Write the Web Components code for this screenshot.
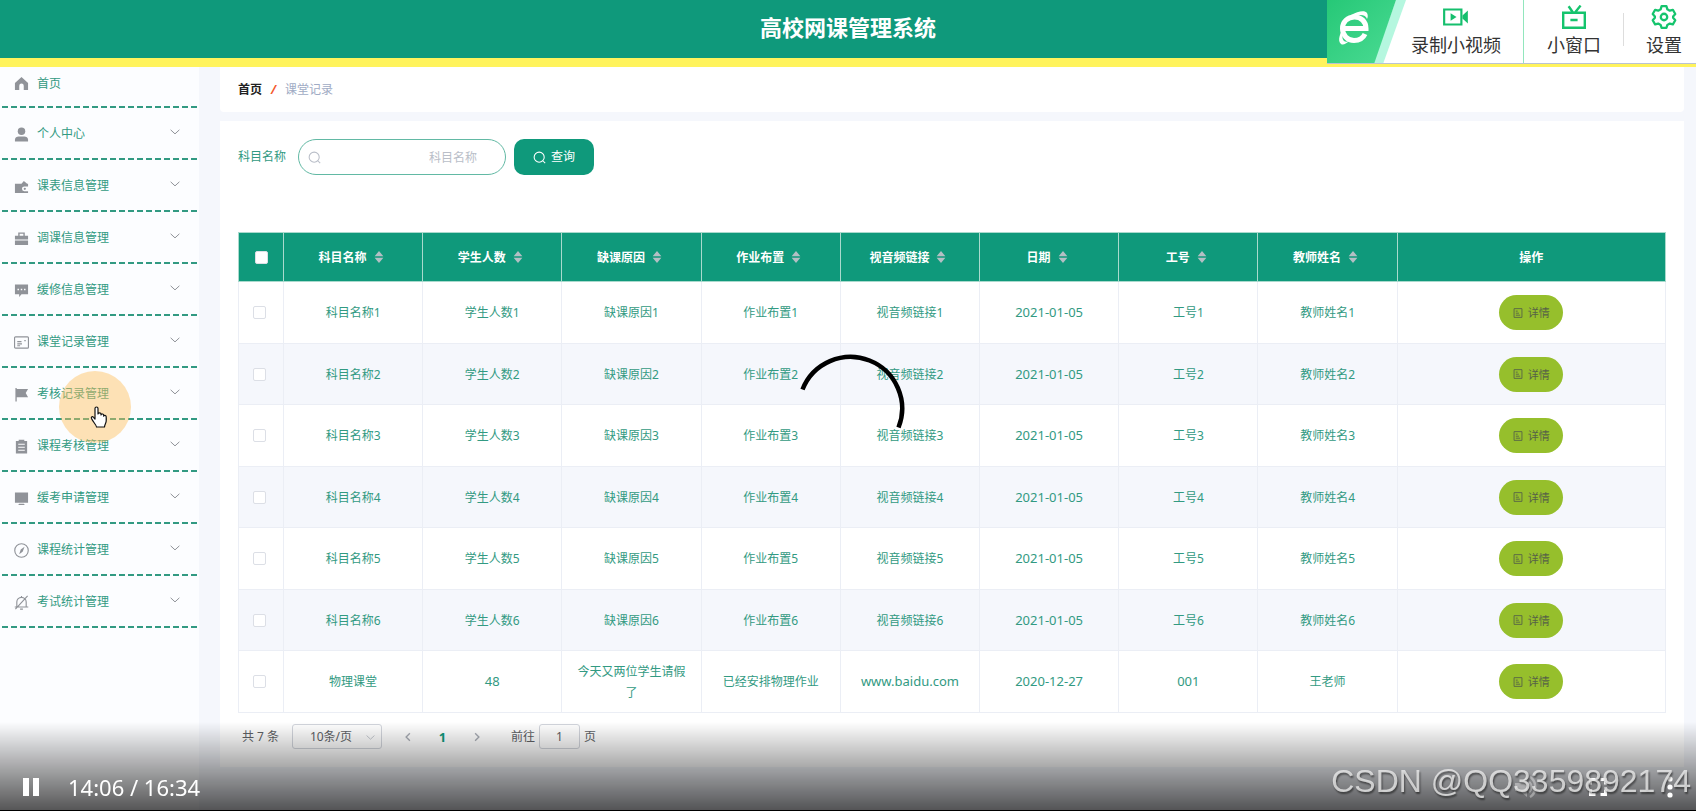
<!DOCTYPE html>
<html lang="zh-CN">
<head>
<meta charset="utf-8">
<meta name="viewport" content="width=device-width, initial-scale=1">
<title>高校网课管理系统</title>
<style>
  html { height: 100%; }
  body {
    margin: 0;
    min-height: 100%;
    --brand: #0f997b;
    --text: #329a82;
    --muted: #909399;
    --canvas: #f5f7fc;
    --line: #ebeef5;
    font: 12px/20px "Noto Sans", "Noto Sans CJK SC", sans-serif;
    color: var(--text);
    background: var(--canvas);
  }
</style>
</head>
<body>
<course-app></course-app>

<script>
const define = (name, html, setup) => {
  const tpl = document.createElement('template');
  tpl.innerHTML = html;
  customElements.define(name, class extends HTMLElement {
    connectedCallback() {
      if (this.shadowRoot) return;
      const root = this.attachShadow({ mode: 'open' });
      root.append(tpl.content.cloneNode(true));
      if (setup) setup(this, root);
    }
  });
};

/* ---------- icons ---------- */
const ICONS = {
  home: '<path fill="currentColor" d="M8 1 1 7.500V15h4.600V10.300a2.400 2.400 0 0 1 4.800 0V15H15V7.500z"/>',
  user: '<circle cx="8" cy="4.500" r="4" fill="currentColor"/><path fill="currentColor" d="M1 15.500v-2C1 11 3 10 5 10h6c2 0 4 1 4 3.500v2z"/>',
  wallet: '<path fill="currentColor" d="M1 5h7l2.500-3 3.500 3h1v3h-4a2.500 2.500 0 0 0 0 5h4v2H1z"/><circle cx="11.500" cy="10.500" r="1.200" fill="currentColor"/>',
  briefcase: '<path fill="currentColor" d="M1 5h3.500V1.500h7V5H15v4H1zM6 3v2h4V3zM1 10h14v5H1z" fill-rule="evenodd"/>',
  chat: '<path fill="currentColor" fill-rule="evenodd" d="M1 1.500h14V12H8l-2.500 3v-3H1zM3.700 6v1.600h1.600V6zm3.500 0v1.600h1.600V6zm3.500 0v1.600h1.600V6z"/>',
  card: '<g fill="none" stroke="currentColor" stroke-width="1.200"><rect x=".6" y="2" width="14.800" height="12" rx="1"/><path d="M3.500 7H8M3.500 9.500h5M3.500 11.500h3M11 6h1.500"/></g>',
  flag: '<path fill="currentColor" d="M1.500 1h1.400v1H15l-2.500 4.500L15 11H2.900v4.500H1.500z"/>',
  clipboard: '<path fill="currentColor" fill-rule="evenodd" d="M2 2h3V.8h6V2h3v13.500H2zM4.500 5v1.200h7V5zm0 3.200v1.200h7V8.200zm0 3.200v1.200h7v-1.200z"/>',
  monitor: '<path fill="currentColor" d="M1 1.500h14v11H1zM5.500 13.500h5l1 1.500h-7z"/>',
  compass: '<circle cx="8" cy="8" r="7.200" fill="none" stroke="currentColor" stroke-width="1.200"/><path fill="currentColor" d="m11.200 4-2 5.200L5.500 12l1.700-5z"/>',
  mute: '<g fill="none" stroke="currentColor" stroke-width="1.200"><path d="M3 12.500V7.500a5 5 0 0 1 10 0v5M.8 12.800h14.400M8 1v1.500M6.500 15h3M1.500 15 14.500 1"/></g>',
  down: '<path fill="none" stroke="currentColor" stroke-width="1.600" d="m1 4.500 7 6.500 7-6.500"/>',
  left: '<path fill="none" stroke="currentColor" stroke-width="2.200" d="M11 2 5 8l6 6"/>',
  right: '<path fill="none" stroke="currentColor" stroke-width="2.200" d="m5 2 6 6-6 6"/>',
  search: '<g fill="none" stroke="currentColor" stroke-width="1.300"><circle cx="7.600" cy="7.600" r="6.200"/><path d="m12 12 3 3"/></g>',
  doc: '<g fill="none" stroke="currentColor" stroke-width="1.400"><path d="M1.700 1h12.600v14H1.700zM4.500 5h3M4.500 8.300h5M4.500 11.500h7"/></g>',
  sort: '<path fill="#b3bfc4" d="m8 0 7 7H1zM1 9h14l-7 7z"/>',
  record: '<path fill="none" stroke="#15bf6d" stroke-width="2" d="M1 1h16v14H1z"/><path fill="#15bf6d" d="m7 4.500 5.500 3.500L7 11.500zM18 6.500 23 2v12l-5-4.500z"/>',
  tv: '<path fill="none" stroke="#15c46d" stroke-width="2" d="M1 6.500h18v12.500H1zM5.500 1l3.500 5M15.500 .5 11 6M7 12.500h6"/>',
  gear: '<g fill="none" stroke="#15c46d" stroke-width="1.900" stroke-linejoin="round"><path d="M8 1h4l.8 2.600 2 1.100 2.600-.7 2 3.500-1.800 2v1.200l1.800 2-2 3.500-2.600-.7-2 1.100L12 19H8l-.8-2.400-2-1.100-2.600.7-2-3.500 1.800-2V9.500l-1.800-2 2-3.500 2.600.7 2-1.100z"/><circle cx="10" cy="10" r="2.700"/></g>'
};
const BOXES = { record: '-1 -2 26 20', tv: '0 0 20 20', gear: '-1 0 22 20', sort: '0 0 16 16' };

define('ui-icon', `
<style>
  :host { display: inline-block; flex: none; width: 13px; height: 13px; }
  svg { display: block; width: 100%; height: 100%; }
</style>
<svg aria-hidden="true"></svg>`, (host, root) => {
  const svg = root.querySelector('svg');
  const name = host.getAttribute('name');
  svg.setAttribute('viewBox', BOXES[name] || '0 0 16 16');
  if (name === 'sort') svg.setAttribute('preserveAspectRatio', 'none');
  svg.innerHTML = ICONS[name];
});

/* ---------- header ---------- */
define('app-header', `
<style>
  :host { display: block; background: var(--brand); border-bottom: 9px solid #fff35c; }
  h1 { margin: 0; height: 58px; font-size: 22px; line-height: 54px; font-weight: 700; color: #fff; text-align: center; }
</style>
<h1><slot></slot></h1>`);

/* ---------- side menu ---------- */
define('menu-item', `
<style>
  :host { display: block; }
  a {
    box-sizing: border-box; display: flex; align-items: center; height: 52px;
    margin-left: 2px; padding: 0 19px 0 12px; color: inherit; text-decoration: none;
    background: repeating-linear-gradient(90deg, #329a82 0 6px, transparent 6px 9px) left bottom / 100% 2px no-repeat;
  }
  :host([top]) a { height: 41px; padding-bottom: 8px; }
  ui-icon { width: 15px; height: 15px; color: var(--muted); margin-right: 8px; }
  .arrow { width: 10px; height: 10px; margin: 0 0 4px auto; }
  :host([top]) .arrow { display: none; }
</style>
<a href="#"><ui-icon></ui-icon><slot></slot><ui-icon class="arrow" name="down"></ui-icon></a>`, (host, root) => {
  const icon = document.createElement('ui-icon');
  icon.setAttribute('name', host.getAttribute('icon'));
  root.querySelector('ui-icon').replaceWith(icon);
});

define('side-menu', `
<style>
  :host { display: block; background: #fcfdff; }
</style>
<nav>
  <menu-item top icon="home">首页</menu-item>
  <menu-item icon="user">个人中心</menu-item>
  <menu-item icon="wallet">课表信息管理</menu-item>
  <menu-item icon="briefcase">调课信息管理</menu-item>
  <menu-item icon="chat">缓修信息管理</menu-item>
  <menu-item icon="card">课堂记录管理</menu-item>
  <menu-item icon="flag">考核记录管理</menu-item>
  <menu-item icon="clipboard">课程考核管理</menu-item>
  <menu-item icon="monitor">缓考申请管理</menu-item>
  <menu-item icon="compass">课程统计管理</menu-item>
  <menu-item icon="mute">考试统计管理</menu-item>
</nav>`);

/* ---------- main column ---------- */
define('crumb-bar', `
<style>
  :host { display: block; background: #fff; border-radius: 0 0 4px 4px; padding: 13px 18px 12px; }
  nav { display: flex; gap: 9px; }
  a { color: #222; font-weight: 700; text-decoration: none; }
  i { color: #f4582c; font-weight: 700; }
  span { color: #a0abc4; }
</style>
<nav aria-label="面包屑"><a href="#">首页</a><i>/</i><span>课堂记录</span></nav>`);

define('record-search', `
<style>
  :host { display: block; }
  form { display: flex; align-items: center; margin: 0; }
  label { width: 60px; }
  .box { position: relative; width: 208px; margin-right: 8px; color: #b9bec8; }
  .box ui-icon { position: absolute; left: 10px; top: 12px; }
  input {
    box-sizing: border-box; display: block; width: 100%; height: 36px; padding: 0 28px 0 30px;
    border: 1px solid #62b9a4; border-radius: 18px; background: #fff; font: inherit; color: #606266;
    text-align: right; outline: none;
  }
  input::placeholder { color: #b9bec8; opacity: 1; }
  button {
    display: flex; align-items: center; justify-content: center; gap: 5px; width: 80px; height: 36px;
    padding: 0; border: 0; border-radius: 10px; background: var(--brand); color: #fff; font: inherit;
  }
</style>
<form onsubmit="return false">
  <label for="subject">科目名称</label>
  <div class="box"><ui-icon name="search"></ui-icon><input id="subject" type="text" placeholder="科目名称"></div>
  <button type="submit"><ui-icon name="search"></ui-icon>查询</button>
</form>`);

define('detail-button', `
<style>
  :host { display: inline-block; vertical-align: middle; }
  button {
    display: flex; align-items: center; justify-content: center; gap: 5px; width: 64px; height: 35px;
    padding: 0; border: 0; border-radius: 18px; background: #96bf2c; color: #566247;
    font: inherit; font-size: 11px;
  }
  ui-icon { width: 10px; height: 10px; }
</style>
<button type="button"><ui-icon name="doc"></ui-icon><slot></slot></button>`);

define('record-table', `
<style>
  :host { display: block; }
  table { width: 100%; table-layout: fixed; border-collapse: collapse; text-align: center; }
  .pick { width: 45px; }
  .ops { width: 18.8%; }
  th, td { padding: 0 10px; border: 1px solid var(--line); line-height: 21px; }
  th { height: 48px; border-color: #a9dacd; background: var(--brand); color: #fff; font-weight: 700; }
  td { height: 61px; }
  tbody tr:nth-child(even) td { height: 60px; background: #f5f7fc; }
  td.latin { font-size: 13px; }
  .pickcell { padding: 0 4px 0 0; }
  th.pickcell { padding: 0; }
  th span { display: flex; align-items: center; justify-content: center; gap: 7px; padding-right: 4px; }
  th ui-icon { width: 10px; height: 12px; }
  input {
    appearance: none; display: block; box-sizing: border-box; width: 13px; height: 13px;
    margin: 0 auto; border: 1px solid #dcdfe6; border-radius: 2px; background: #fff;
  }
</style>
<table>
  <colgroup><col class="pick"><col span="8"><col class="ops"></colgroup>
  <thead><tr></tr></thead>
  <tbody></tbody>
</table>`, (host, root) => {
  const heads = ['科目名称', '学生人数', '缺课原因', '作业布置', '视音频链接', '日期', '工号', '教师姓名'];
  const rows = [1, 2, 3, 4, 5, 6].map(n => heads.map(h => h === '日期' ? '2021-01-05' : h + n));
  rows.push(['物理课堂', '48', '今天又两位学生请假了', '已经安排物理作业', 'www.baidu.com', '2020-12-27', '001', '王老师']);
  root.querySelector('thead tr').innerHTML =
    '<th class="pickcell"><input type="checkbox" aria-label="全选"></th>' +
    heads.map(h => `<th><span>${h}<ui-icon name="sort"></ui-icon></span></th>`).join('') +
    '<th>操作</th>';
  root.querySelector('tbody').innerHTML = rows.map((r, i) =>
    `<tr><td class="pickcell"><input type="checkbox" aria-label="选择第${i + 1}行"></td>` +
    r.map(c => `<td${/^[\w.-]+$/.test(c) ? ' class="latin"' : ''}>${c}</td>`).join('') +
    '<td><detail-button>详情</detail-button></td></tr>').join('');
});

define('record-pager', `
<style>
  :host { display: flex; align-items: center; padding-left: 4px; color: #606266; }
  .total { width: 50px; }
  .size { position: relative; width: 90px; color: #c0c4cc; }
  .size ui-icon { position: absolute; right: 7px; top: 9px; width: 9px; height: 9px; }
  select, input {
    appearance: none; box-sizing: border-box; height: 25px; margin: 0; border: 1px solid #d3d6dd;
    border-radius: 3px; background: transparent; font: inherit; color: #606266;
    text-align: center; text-align-last: center; outline: none;
  }
  select { display: block; width: 100%; padding: 0 20px 0 8px; }
  .pages { display: flex; align-items: center; width: 79px; justify-content: space-between; margin: 0 29px 0 21px; }
  button { display: block; padding: 0; border: 0; background: none; font: inherit; color: #a9adb5; }
  .pages ui-icon { display: block; width: 10px; height: 10px; }
  .pages .on { font-size: 13px; font-weight: 700; color: var(--brand); }
  input { width: 41px; padding: 0; margin: 0 4px; }
</style>
<span class="total">共 7 条</span>
<div class="size"><select aria-label="每页条数"><option>10条/页</option></select><ui-icon name="down"></ui-icon></div>
<div class="pages">
  <button type="button" aria-label="上一页"><ui-icon name="left"></ui-icon></button>
  <button type="button" class="on">1</button>
  <button type="button" aria-label="下一页"><ui-icon name="right"></ui-icon></button>
</div>
<label for="goto">前往</label><input id="goto" type="text" value="1"><span>页</span>`);

/* ---------- screen-capture toolbar ---------- */
define('capture-tool', `
<style>
  :host { display: block; }
  button {
    display: flex; flex-direction: column; align-items: center; width: 100%; height: 64px; padding: 5px 0 0;
    border: 0; background: none; color: #333; font: inherit; font-size: 18px; line-height: 26px; white-space: nowrap;
  }
  ui-icon { width: 28px; height: 24px; margin-bottom: 3px; }
</style>
<button type="button"><ui-icon></ui-icon><slot></slot></button>`, (host, root) => {
  const icon = document.createElement('ui-icon');
  icon.setAttribute('name', host.getAttribute('icon'));
  root.querySelector('ui-icon').replaceWith(icon);
});

define('capture-bar', `
<style>
  :host {
    position: absolute; top: 0; right: 0; box-sizing: border-box; display: grid;
    grid-template-columns: 72px 125px 100px 72px; height: 64px; overflow: hidden;
    background: #fff; border-bottom: 1px solid #b9c3d2;
  }
  .logo { width: 80px; height: 64px; }
  .rec { padding-left: 14px; padding-right: 24px; border-right: 1px solid #92e6bd; }
  .win { position: relative; }
  .win::after { content: ""; position: absolute; right: 0; top: 13px; width: 1px; height: 33px; background: #ddd; }
  .set { padding-left: 8px; }
</style>
<svg class="logo" viewBox="0 0 80 64" aria-hidden="true">
  <defs><linearGradient id="g" x1="0" y1="0" x2="1" y2="1"><stop offset="0" stop-color="#26c877"/><stop offset="1" stop-color="#4bdb93"/></linearGradient></defs>
  <path fill="#b5f7df" d="M69 0h10L56 64H46z"/>
  <path fill="url(#g)" d="M0 0h69L47 64H0z"/>
  <path fill="none" stroke="#fff" stroke-width="5" d="M15.500 28.500h23.500c0-7-5-11.500-11.500-11.500-7 0-12 5-12 11.500S20.500 40.500 27 40.500c5 0 9-2 11-6.500"/>
  <path fill="#fff" d="M14 44c-4-3-1-12 4-18-2 7-4 12-1 15 2 1.500 5 0 5 0-3 3-6 4.500-8 3zM24 15c7-4 14-5 16-2 1 2 1 4 0 6-1-4-6-5-12-3z"/>
</svg>
<capture-tool class="rec" icon="record">录制小视频</capture-tool>
<capture-tool class="win" icon="tv">小窗口</capture-tool>
<capture-tool class="set" icon="gear">设置</capture-tool>`);

/* ---------- overlays ---------- */
define('loading-arc', `
<style>
  :host { position: fixed; inset: 0; display: grid; place-items: center; pointer-events: none; }
</style>
<svg width="116" height="116" viewBox="0 0 116 116" aria-hidden="true">
  <path fill="none" stroke="#000" stroke-width="4.500" d="M12.500 41.500A51 51 0 0 1 108.500 79.500"/>
</svg>`);

define('click-pointer', `
<style>
  :host {
    position: absolute; left: 59px; top: 371px; width: 72px; height: 72px; border-radius: 50%;
    background: rgba(255, 190, 90, .45); pointer-events: none;
  }
  svg { position: absolute; left: 31px; top: 35px; }
</style>
<svg width="18" height="22" viewBox="0 0 18 22" aria-hidden="true">
  <path fill="#fff" stroke="#111" stroke-width="1.200" stroke-linejoin="round" d="M5 13V2.500a1.500 1.500 0 0 1 3 0V8c0-1.500 3-1.500 3 0v1c0-1.500 2.700-1.300 2.700.2v1c0-1.200 2.500-1 2.500.6V15c0 2-1.700 3.500-1.700 6H6.500c0-2-3.500-5-5-8.500-.7-1.800 1-2.500 2-1.200z"/>
</svg>`);

define('player-bar', `
<style>
  :host {
    position: fixed; left: 0; right: 0; bottom: 0; box-sizing: border-box; height: 89px;
    padding: 41px 23px 0; border-bottom: 1px solid #000; color: #fff;
    background: linear-gradient(rgba(0, 0, 0, 0), rgba(0, 0, 0, .66));
    display: flex; align-items: center;
  }
  button { display: block; padding: 0; border: 0; background: none; color: inherit; }
  svg { display: block; fill: currentColor; }
  time { margin: 0 auto 0 29px; font-size: 22px; line-height: 30px; }
  .vol { margin-right: 51px; opacity: .35; }
  .full { margin-right: 60px; }
  .mark {
    position: absolute; right: 5px; bottom: 11px; font: 32px/36px "Liberation Sans", sans-serif;
    color: rgba(235, 235, 235, .8); text-shadow: 1px 2px 2px rgba(0, 0, 0, .5); white-space: nowrap;
  }
</style>
<button type="button" aria-label="暂停"><svg width="16" height="18"><path d="M0 0h6v18H0zM10 0h6v18h-6z"/></svg></button>
<time>14:06 / 16:34</time>
<button type="button" class="vol" aria-label="音量"><svg width="24" height="22" viewBox="0 0 24 22"><path d="M1 7h5l7-6v20l-7-6H1z"/><path fill="none" stroke="currentColor" stroke-width="2.500" d="M15 6c3 2 3 8 0 10M16 1c7 4 7 16 0 20"/></svg></button>
<button type="button" class="full" aria-label="全屏"><svg width="18" height="18"><path fill="none" stroke="currentColor" stroke-width="3" d="M1.500 6.500v-5h5M11.500 1.500h5v5M16.500 11.500v5h-5M6.500 16.500h-5v-5"/></svg></button>
<button type="button" aria-label="更多"><svg width="6" height="22"><circle cx="3" cy="3" r="2.600"/><circle cx="3" cy="11" r="2.600"/><circle cx="3" cy="19" r="2.600"/></svg></button>
<span class="mark">CSDN @QQ3359892174</span>`);

/* ---------- shell ---------- */
define('course-app', `
<style>
  :host { display: grid; grid-template-rows: auto 1fr; min-height: 100vh; }
  .body { display: grid; grid-template-columns: 199px minmax(0, 1fr); }
  main { padding: 0 12px 44px 21px; display: flex; flex-direction: column; gap: 9px; }
  .card { flex: 1; background: #fff; padding: 18px 18px 17px; }
  record-table { margin: 57px 0 11px; }
</style>
<app-header>高校网课管理系统</app-header>
<div class="body">
  <side-menu></side-menu>
  <main>
    <crumb-bar></crumb-bar>
    <section class="card">
      <record-search></record-search>
      <record-table></record-table>
      <record-pager></record-pager>
    </section>
  </main>
</div>
<capture-bar></capture-bar>
<click-pointer></click-pointer>
<loading-arc></loading-arc>
<player-bar></player-bar>`);
</script>
</body>
</html>
